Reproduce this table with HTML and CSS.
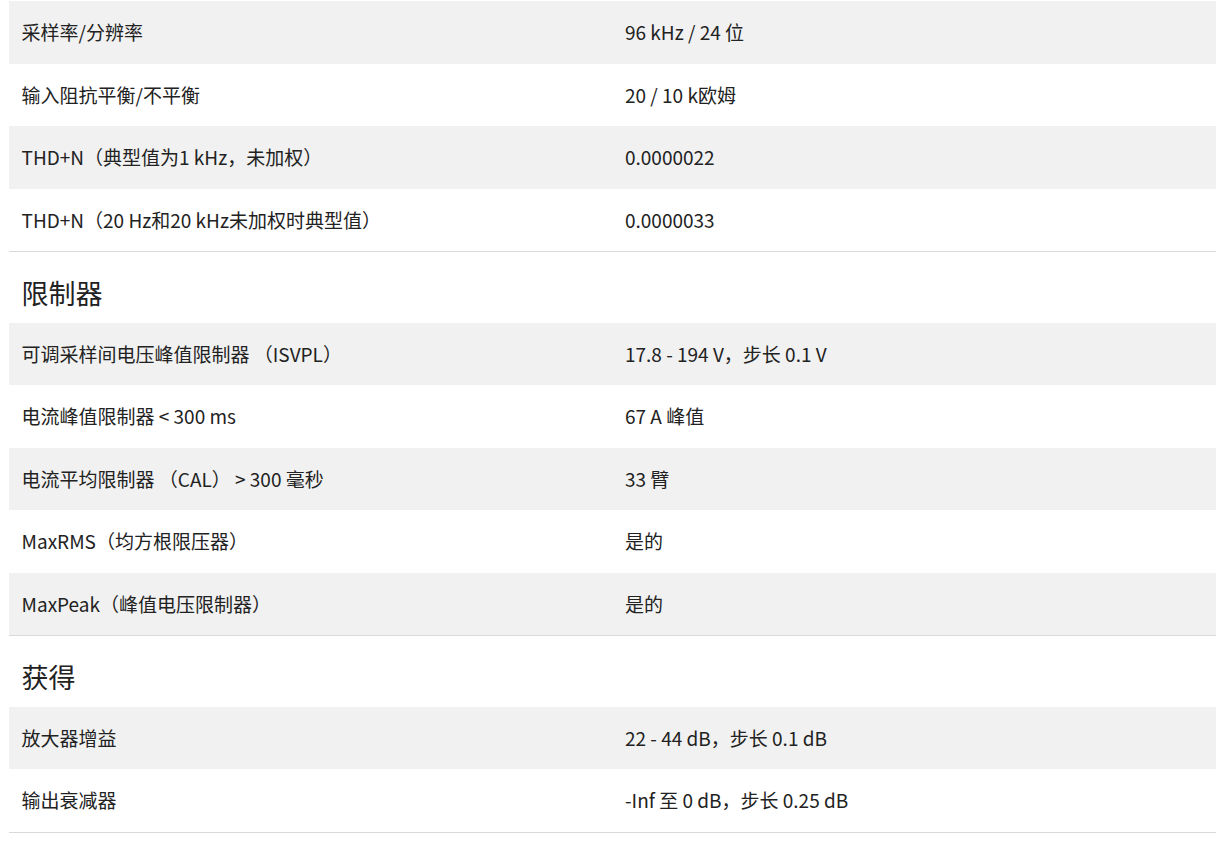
FILE: index.html
```html
<!DOCTYPE html>
<html lang="zh-CN">
<head>
<meta charset="utf-8">
<title>规格</title>
<link rel="stylesheet" href="styles.css">
</head>
<body>
<div class="specs">
  <section class="group">
    <div class="row"><div class="cell">采样率/分辨率</div><div class="cell">96 kHz / 24 位</div></div>
    <div class="row"><div class="cell">输入阻抗平衡/不平衡</div><div class="cell">20 / 10 k欧姆</div></div>
    <div class="row"><div class="cell">THD+N（典型值为1 kHz，未加权）</div><div class="cell">0.0000022</div></div>
    <div class="row"><div class="cell">THD+N（20 Hz和20 kHz未加权时典型值）</div><div class="cell">0.0000033</div></div>
  </section>
  <section class="group">
    <h2 class="group-title">限制器</h2>
    <div class="row"><div class="cell">可调采样间电压峰值限制器 （ISVPL）</div><div class="cell">17.8 - 194 V，步长 0.1 V</div></div>
    <div class="row"><div class="cell">电流峰值限制器 &lt; 300 ms</div><div class="cell">67 A 峰值</div></div>
    <div class="row"><div class="cell">电流平均限制器 （CAL） &gt; 300 毫秒</div><div class="cell">33 臂</div></div>
    <div class="row"><div class="cell">MaxRMS（均方根限压器）</div><div class="cell">是的</div></div>
    <div class="row"><div class="cell">MaxPeak（峰值电压限制器）</div><div class="cell">是的</div></div>
  </section>
  <section class="group">
    <h2 class="group-title">获得</h2>
    <div class="row"><div class="cell">放大器增益</div><div class="cell">22 - 44 dB，步长 0.1 dB</div></div>
    <div class="row"><div class="cell">输出衰减器</div><div class="cell">-Inf 至 0 dB，步长 0.25 dB</div></div>
  </section>
</div>
</body>
</html>
```

FILE: styles.css
```css
html, body {
  margin: 0;
  padding: 0;
  background: #ffffff;
}

body {
  font-family: "Noto Sans CJK SC", "Noto Sans", sans-serif;
  color: #222222;
}

.specs {
  width: 1207px;
  margin-left: 9px;
  padding-top: 1px;
}

.group {
  border-bottom: 1px solid #d9d9d9;
}

.group-title {
  margin: 0;
  padding: 24px 12.5px 13.5px;
  font-size: 27px;
  font-weight: 400;
  line-height: 33px;
  color: #222222;
}

.row {
  display: grid;
  grid-template-columns: 1fr 1fr;
  align-items: center;
  height: 62.5px;
}

.row:nth-of-type(odd) {
  background: #f1f1f1;
}

.cell {
  padding: 0 12.5px;
  font-size: 19px;
  line-height: 24px;
}
```
